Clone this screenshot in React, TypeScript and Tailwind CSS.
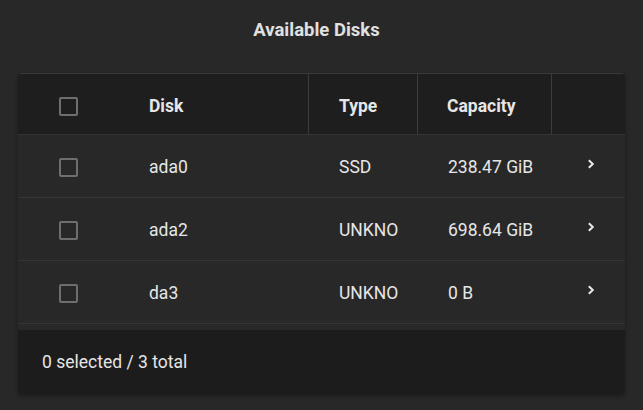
import React from "react";

const rows = [
  { disk: "ada0", type: "SSD", cap: "238.47 GiB" },
  { disk: "ada2", type: "UNKNO", cap: "698.64 GiB" },
  { disk: "da3", type: "UNKNO", cap: "0 B" },
];

const cols = "grid grid-cols-[101px_190px_109px_134px_63px]";

function Box() {
  return <div className="w-[19px] h-[19px] rounded-[2px] border-2 border-[#6e6e6e]" />;
}

function Chevron() {
  return (
    <svg width="8" height="10" viewBox="0 0 8 10" className="mb-[6px] ml-[15px]">
      <path d="M1.8 1.2 L5.8 5 L1.8 8.8" fill="none" stroke="#e8e8e8" strokeWidth="2" />
    </svg>
  );
}

export default function App() {
  return (
    <div
      className="w-[643px] h-[410px] bg-[#282828] text-[#e6e6e6] overflow-hidden"
      style={{ fontFamily: "Roboto, 'Noto Sans', sans-serif" }}
    >
      <div className="h-[60px] flex items-center justify-center pr-[10px] pt-[2px] text-[18.5px] font-bold text-[#e0e0e0]">
        Available Disks
      </div>
      <div className="mx-[18px] mt-[13px] rounded-[4px] overflow-hidden shadow-[0_2px_4px_rgba(0,0,0,0.35)]">
        <div className={`${cols} h-[62px] bg-[#1e1e1e] border-t border-[#3a3a3a] border-b border-b-[#333333] text-[17.5px] font-bold`}>
          <div className="flex items-center justify-center pt-[5px]"><Box /></div>
          <div className="flex items-center pl-[30px] pt-[4px] border-r border-[#3c3c3c]">Disk</div>
          <div className="flex items-center pl-[30px] pt-[4px] border-r border-[#3c3c3c]">Type</div>
          <div className="flex items-center pl-[29px] pt-[4px] border-r border-[#3c3c3c]">Capacity</div>
          <div />
        </div>
        <div className="bg-[#282828] pb-[6px]">
          {rows.map((r) => (
            <div key={r.disk} className={`${cols} h-[63px] border-b border-[#353535] text-[17.5px]`}>
              <div className="flex items-center justify-center pt-[3px]"><Box /></div>
              <div className="flex items-center pl-[30px] pt-[2px]">{r.disk}</div>
              <div className="flex items-center pl-[30px] pt-[2px]">{r.type}</div>
              <div className="flex items-center pl-[30px] pt-[2px]">{r.cap}</div>
              <div className="flex items-center justify-center pt-[2px]"><Chevron /></div>
            </div>
          ))}
        </div>
        <div className="h-[64px] bg-[#1c1c1c] flex items-center pl-[24px] text-[17.5px]">
          0 selected / 3 total
        </div>
      </div>
    </div>
  );
}
